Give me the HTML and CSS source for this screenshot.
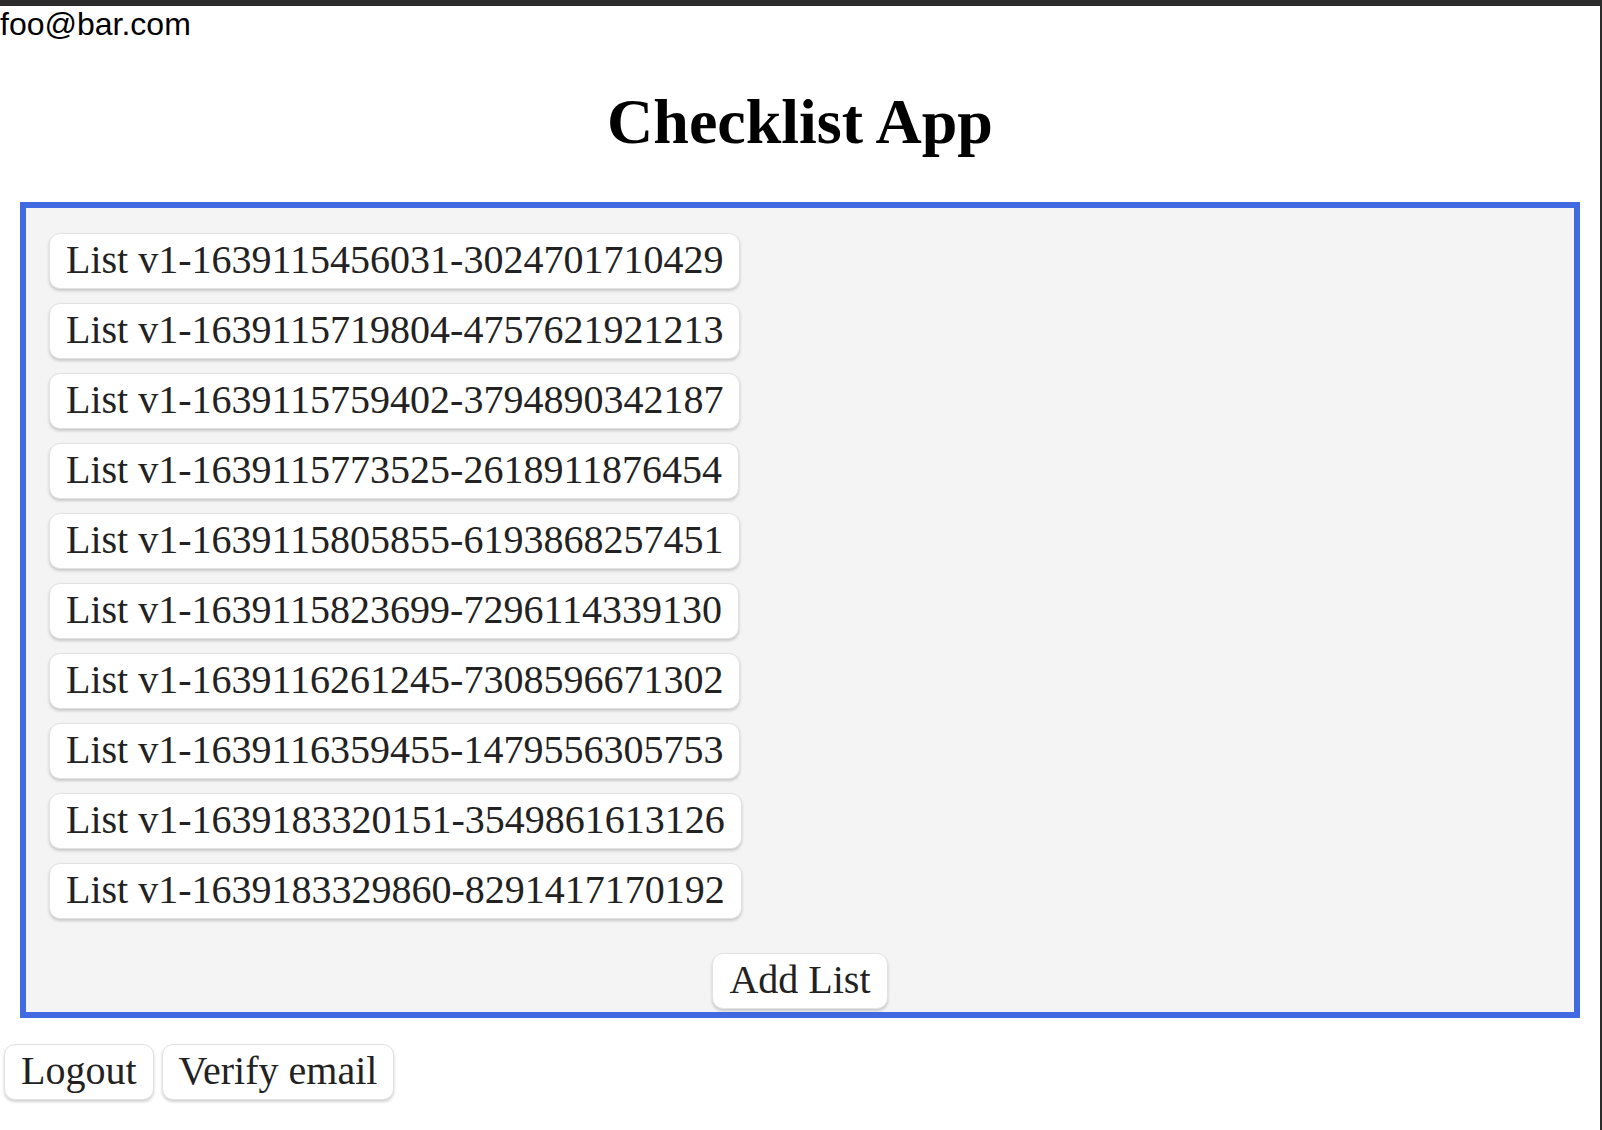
FILE: index.html
```html
<!DOCTYPE html>
<html lang="en">
<head>
<meta charset="utf-8">
<title>Checklist App</title>
<link rel="stylesheet" href="styles.css">
</head>
<body>
<div class="frame">
  <div class="user">foo@bar.com</div>
  <h1 class="title">Checklist App</h1>
  <div class="box">
    <div class="lists">
      <button class="btn">List v1-1639115456031-3024701710429</button>
      <button class="btn">List v1-1639115719804-4757621921213</button>
      <button class="btn">List v1-1639115759402-3794890342187</button>
      <button class="btn">List v1-1639115773525-2618911876454</button>
      <button class="btn">List v1-1639115805855-6193868257451</button>
      <button class="btn">List v1-1639115823699-7296114339130</button>
      <button class="btn">List v1-1639116261245-7308596671302</button>
      <button class="btn">List v1-1639116359455-1479556305753</button>
      <button class="btn">List v1-1639183320151-3549861613126</button>
      <button class="btn">List v1-1639183329860-8291417170192</button>
    </div>
    <div class="add-row">
      <button class="btn">Add List</button>
    </div>
  </div>
  <div class="actions">
    <button class="btn">Logout</button>
    <button class="btn">Verify email</button>
  </div>
</div>
</body>
</html>
```

FILE: styles.css
```css
html, body {
  margin: 0;
  padding: 0;
  background: #ffffff;
}

.frame {
  box-sizing: border-box;
  min-height: 100vh;
  border-top: 6px solid #2b2b2b;
  border-right: 2px solid #2b2b2b;
  background: #ffffff;
}

.user {
  font-family: "Liberation Sans", Arial, sans-serif;
  font-size: 32px;
  line-height: 37px;
  color: #000000;
}

.title {
  font-family: "Liberation Serif", "Times New Roman", serif;
  font-weight: bold;
  font-size: 64px;
  line-height: 74px;
  text-align: center;
  margin: 42px 0 43px;
  color: #000000;
}

.box {
  margin: 0 20px;
  border: 6px solid #4169e1;
  background: #f4f4f4;
  padding: 25px 23px 3px;
}

.lists {
  display: flex;
  flex-direction: column;
  align-items: flex-start;
  gap: 14px;
}

.btn {
  font-family: "Liberation Serif", "Times New Roman", serif;
  font-size: 40px;
  line-height: 46px;
  color: #222222;
  background: #ffffff;
  border: 1px solid #e2e2e2;
  border-radius: 11px;
  padding: 3px 16px 5px;
  margin: 0;
  box-shadow: 0 2px 3px rgba(0, 0, 0, 0.18);
  cursor: pointer;
}

.add-row {
  display: flex;
  justify-content: center;
  margin-top: 34px;
}

.actions {
  display: flex;
  gap: 8px;
  margin-top: 26px;
  padding-left: 4px;
}
```
